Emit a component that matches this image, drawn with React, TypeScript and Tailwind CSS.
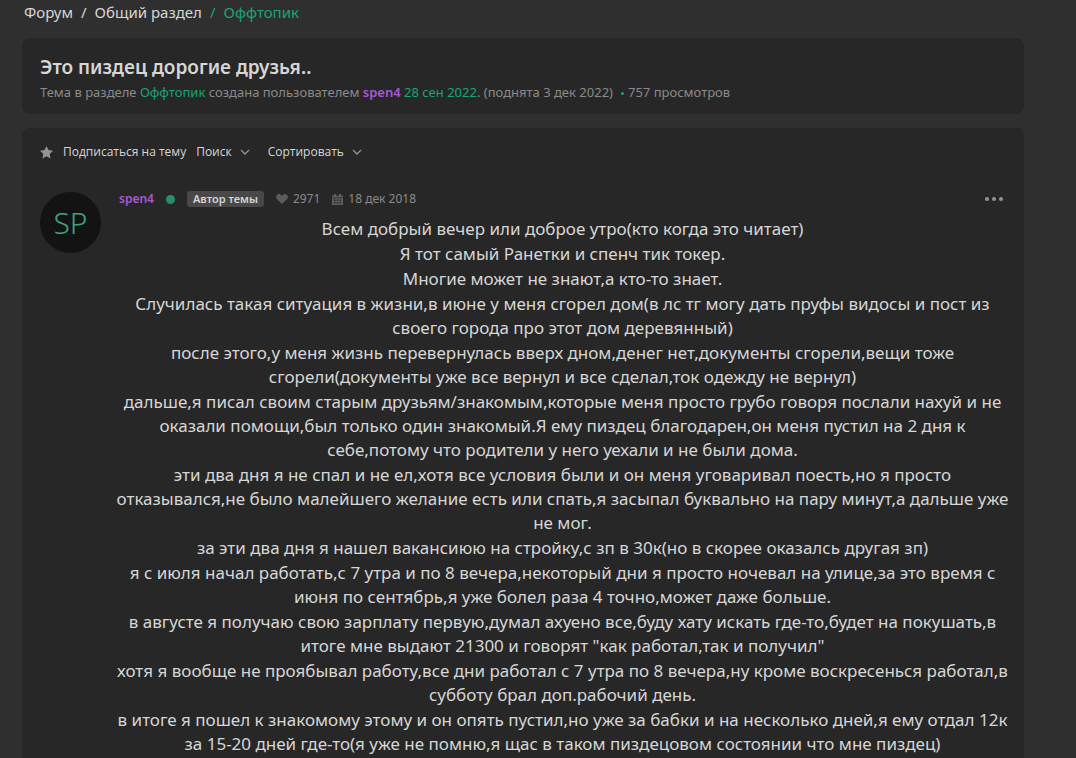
import React from "react";

const paragraphs: string[] = [
  "Всем добрый вечер или доброе утро(кто когда это читает)",
  "Я тот самый Ранетки и спенч тик токер.",
  "Многие может не знают,а кто-то знает.",
  "Случилась такая ситуация в жизни,в июне у меня сгорел дом(в лс тг могу дать пруфы видосы и пост из своего города про этот дом деревянный)",
  "после этого,у меня жизнь перевернулась вверх дном,денег нет,документы сгорели,вещи тоже сгорели(документы уже все вернул и все сделал,ток одежду не вернул)",
  "дальше,я писал своим старым друзьям/знакомым,которые меня просто грубо говоря послали нахуй и не оказали помощи,был только один знакомый.Я ему пиздец благодарен,он меня пустил на 2 дня к себе,потому что родители у него уехали и не были дома.",
  "эти два дня я не спал и не ел,хотя все условия были и он меня уговаривал поесть,но я просто отказывался,не было малейшего желание есть или спать,я засыпал буквально на пару минут,а дальше уже не мог.",
  "за эти два дня я нашел вакансиюю на стройку,с зп в 30к(но в скорее оказалсь другая зп)",
  "я с июля начал работать,с 7 утра и по 8 вечера,некоторый дни я просто ночевал на улице,за это время с июня по сентябрь,я уже болел раза 4 точно,может даже больше.",
  "в августе я получаю свою зарплату первую,думал ахуено все,буду хату искать где-то,будет на покушать,в итоге мне выдают 21300 и говорят \"как работал,так и получил\"",
  "хотя я вообще не проябывал работу,все дни работал с 7 утра по 8 вечера,ну кроме воскресенься работал,в субботу брал доп.рабочий день.",
  "в итоге я пошел к знакомому этому и он опять пустил,но уже за бабки и на несколько дней,я ему отдал 12к за 15-20 дней где-то(я уже не помню,я щас в таком пиздецовом состоянии что мне пиздец)",
];

function Chevron() {
  return (
    <svg className="size-2.5" viewBox="0 0 10 10" fill="none" stroke="#949494" strokeWidth="1.3" aria-hidden="true">
      <path d="M1 3l4 4 4-4" />
    </svg>
  );
}

function Breadcrumbs() {
  return (
    <nav aria-label="Навигация" className="flex h-6 items-center gap-2 px-0.5 text-[15px] leading-5">
      <a href="#forum">Форум</a>
      <span>/</span>
      <a href="#general">Общий раздел</a>
      <span className="text-[#17a678]">/</span>
      <a href="#offtopic" className="text-[#17a678]">Оффтопик</a>
    </nav>
  );
}

function ThreadHeader() {
  return (
    <header className="mt-[14px] rounded-lg bg-[#272727] px-[18px] pt-4 pb-[10px]">
      <h1 className="text-[19px] leading-[26px] font-semibold">Это пиздец дорогие друзья..</h1>
      <p className="text-[13px] leading-6 text-[#8a8a8a]">
        Тема в разделе <a href="#offtopic" className="text-[#17a678]">Оффтопик</a> создана пользователем{" "}
        <a href="#spen4" className="font-semibold text-[#a957d6]">spen4</a>{" "}
        <a href="#date" className="text-[#17a678]">28 сен 2022</a>. (поднята 3 дек 2022)
        <span className="mr-1 ml-2 inline-block size-[3px] rounded-full bg-[#17a678] align-middle" />
        757 просмотров
      </p>
    </header>
  );
}

function Toolbar() {
  return (
    <div className="flex h-6 items-center font-['Open_Sans',sans-serif] text-[12px] leading-4">
      <button type="button" className="flex items-center gap-2.5">
        <svg className="size-[13px]" viewBox="0 0 24 24" fill="#949494" aria-hidden="true">
          <path d="M12 0l3.600 7.600 8.400 1.200-6.100 5.900 1.500 8.500L12 19.100l-7.400 4.100 1.500-8.500L0 8.800l8.400-1.200z" />
        </svg>
        Подписаться на тему
      </button>
      <button type="button" className="ml-2.5 flex items-center gap-2">
        Поиск
        <Chevron />
      </button>
      <button type="button" className="ml-[18px] flex items-center gap-2">
        Сортировать
        <Chevron />
      </button>
    </div>
  );
}

function PostMeta() {
  return (
    <div className="flex h-4 items-center text-[12px] leading-4 text-[#8a8a8a]">
      <a href="#spen4" className="font-semibold text-[#a957d6]">spen4</a>
      <span className="ml-3 size-[9px] rounded-full bg-[#2a8f69]" />
      <span className="ml-3 rounded-[3px] bg-[#484848] px-1.5 text-[11px] leading-4 font-semibold text-[#d6d6d6]">
        Автор темы
      </span>
      <svg className="ml-3 h-2.5 w-3" viewBox="0 0 24 20" fill="#5c5c5c" aria-hidden="true">
        <path d="M12 20L2 10.500C-1 7-.3 2.500 3 .8 6-.7 9.500.3 12 3.500 14.500.3 18-.7 21 .8c3.300 1.700 4 6.200 1 9.700z" />
      </svg>
      <span className="ml-[5px]">2971</span>
      <svg className="ml-3 size-[11px]" viewBox="0 0 22 22" fill="#5c5c5c" aria-hidden="true">
        <path
          fillRule="evenodd"
          d="M4 0h4v3h6V0h4v3h4v4H0V3h4zM0 8.500h22V22H0zM4 11v3h3v-3zm5.500 0v3h3v-3zm5.500 0v3h3v-3zM4 16v3h3v-3zm5.500 0v3h3v-3zm5.500 0v3h3v-3z"
        />
      </svg>
      <a href="#post" className="ml-[5px]">18 дек 2018</a>
      <button type="button" aria-label="Меню" className="mr-[3px] ml-auto flex gap-[3px]">
        <span className="size-1 rounded-full bg-[#949494]" />
        <span className="size-1 rounded-full bg-[#949494]" />
        <span className="size-1 rounded-full bg-[#949494]" />
      </button>
    </div>
  );
}

export default function App() {
  return (
    <div className="h-screen overflow-hidden bg-[#2f2f2f] pr-[52px] pl-[22px] font-['Noto_Sans',sans-serif] text-[#d6d6d6]">
      <Breadcrumbs />
      <main>
        <ThreadHeader />
        <section className="mt-[14px] rounded-lg bg-[#272727] px-[18px] pt-3 pb-6">
          <Toolbar />
          <article className="mt-[27px] flex gap-[18px]">
            <div className="mt-px flex size-[61px] shrink-0 items-center justify-center rounded-full bg-[#131313] text-[30px] leading-none font-light text-[#3aa57c]">
              SP
            </div>
            <div className="min-w-0 flex-1">
              <PostMeta />
              <div className="-mx-2 mt-[10px] flex flex-col gap-px text-center text-[17px] leading-6">
                {paragraphs.map((text) => (
                  <p key={text}>{text}</p>
                ))}
              </div>
            </div>
          </article>
        </section>
      </main>
    </div>
  );
}
